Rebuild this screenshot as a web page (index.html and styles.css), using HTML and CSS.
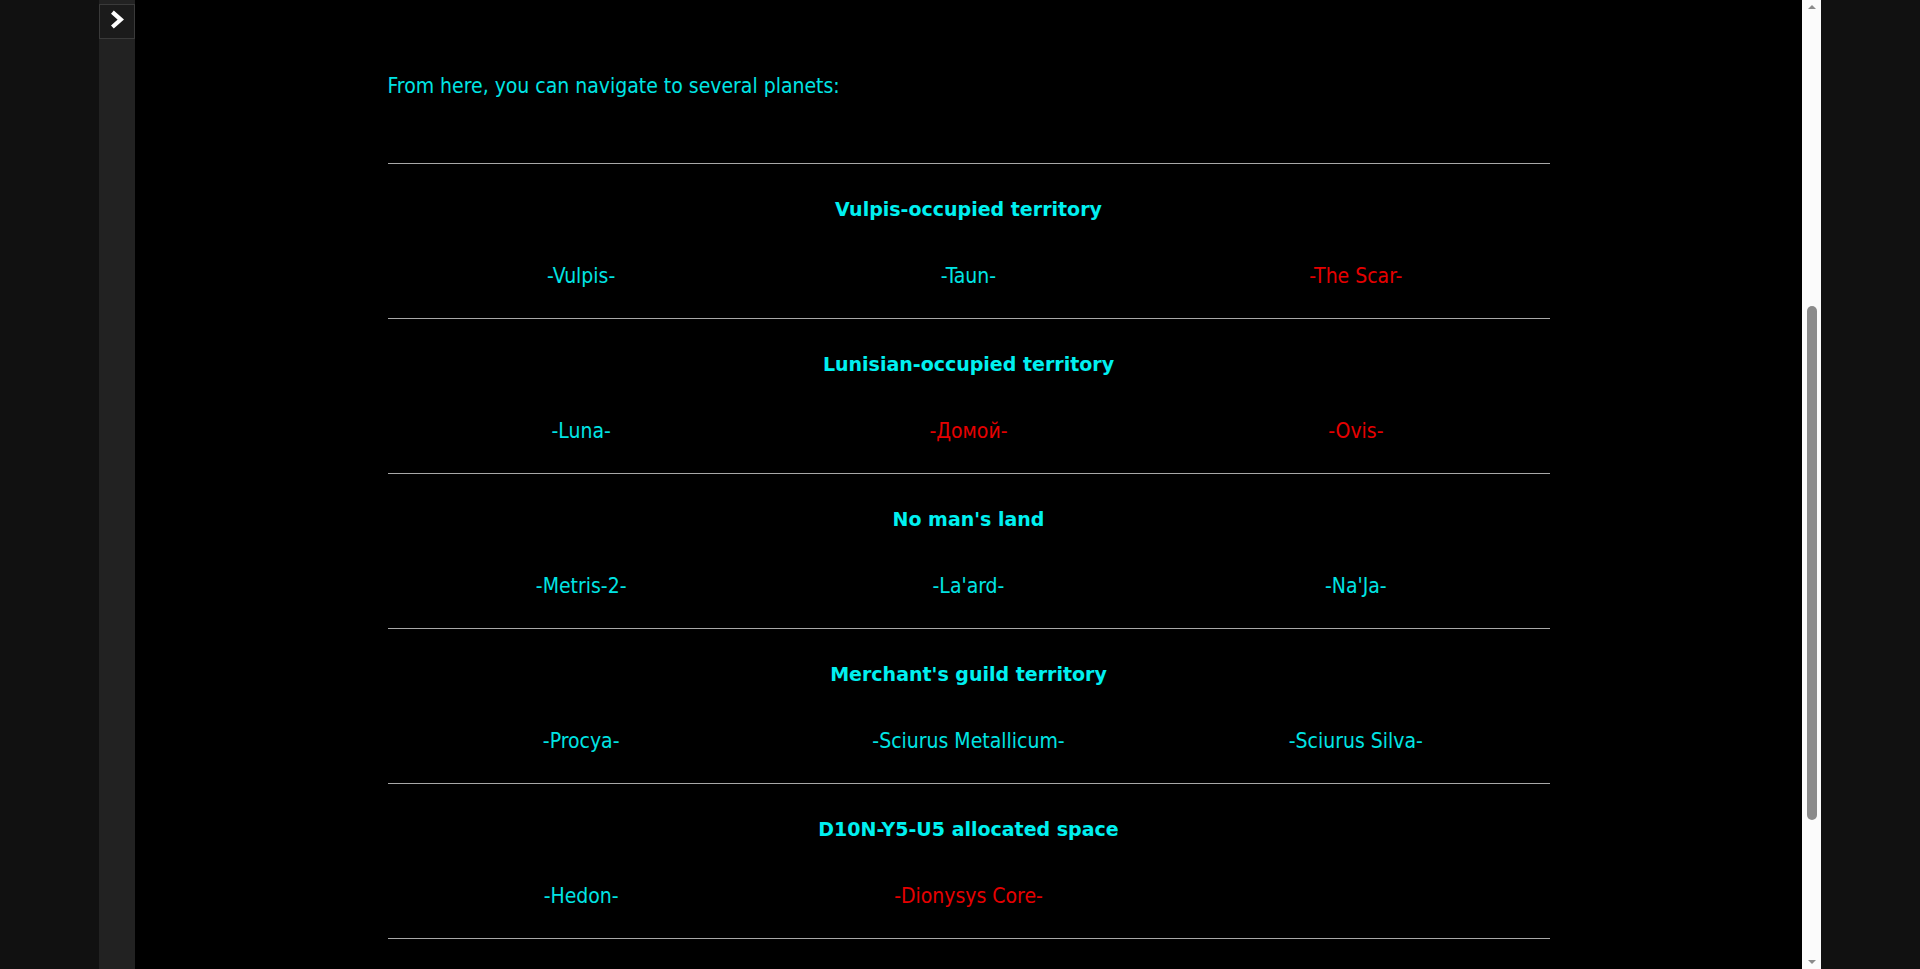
FILE: index.html
```html
<!DOCTYPE html>
<html>
<head>
    <title>Navigation</title>
    <link rel="stylesheet" href="styles.css">
</head>
<body>
    <div class="app">
        <aside class="sidebar">
            <button class="toggle" title="Open menu">
                <svg width="14" height="20" viewBox="0 0 14 20">
                    <polyline points="2.4,2.2 10.8,9.6 2.4,17" fill="none" stroke="#fff" stroke-width="4.2" stroke-linejoin="miter"/>
                </svg>
            </button>
        </aside>

        <main class="main">
            <div class="viewport">
                <div class="content">
                    <p class="lead">From here, you can navigate to several planets:</p>

                    <section class="region">
                        <h3>Vulpis-occupied territory</h3>
                        <div class="planets">
                            <a href="#">-Vulpis-</a>
                            <a href="#">-Taun-</a>
                            <a href="#" class="locked">-The Scar-</a>
                        </div>
                    </section>

                    <section class="region">
                        <h3>Lunisian-occupied territory</h3>
                        <div class="planets">
                            <a href="#">-Luna-</a>
                            <a href="#" class="locked">-Домой-</a>
                            <a href="#" class="locked">-Ovis-</a>
                        </div>
                    </section>

                    <section class="region">
                        <h3>No man's land</h3>
                        <div class="planets">
                            <a href="#">-Metris-2-</a>
                            <a href="#">-La'ard-</a>
                            <a href="#">-Na'Ja-</a>
                        </div>
                    </section>

                    <section class="region">
                        <h3>Merchant's guild territory</h3>
                        <div class="planets">
                            <a href="#">-Procya-</a>
                            <a href="#">-Sciurus Metallicum-</a>
                            <a href="#">-Sciurus Silva-</a>
                        </div>
                    </section>

                    <section class="region">
                        <h3>D10N-Y5-U5 allocated space</h3>
                        <div class="planets">
                            <a href="#">-Hedon-</a>
                            <a href="#" class="locked">-Dionysys Core-</a>
                        </div>
                    </section>
                </div>
            </div>

            <div class="scrollbar">
                <span class="arrow up"></span>
                <div class="track">
                    <div class="thumb"></div>
                </div>
                <span class="arrow down"></span>
            </div>
        </main>
    </div>
</body>
</html>
```

FILE: styles.css
```css
body {
    margin: 0;
    background-color: #111;
    font-family: "DejaVu Sans Condensed", "DejaVu Sans", sans-serif;
    color: #00e4e4;
}

.app {
    display: flex;
    width: 1722px;
    height: 100vh;
    margin: 0 auto;
}

.sidebar {
    width: 36px;
    flex-shrink: 0;
    background-color: #222;
    padding-top: 4px;
}

.toggle {
    display: flex;
    align-items: center;
    justify-content: center;
    width: 36px;
    height: 35px;
    padding: 0 0 3px;
    border: 1px solid #3a3a3a;
    background-color: #1b1b1b;
    cursor: pointer;
}

.main {
    flex: 1;
    display: flex;
    min-width: 0;
}

.viewport {
    flex: 1;
    background-color: #000;
    overflow-y: auto;
}

.scrollbar {
    width: 19px;
    flex-shrink: 0;
    display: flex;
    flex-direction: column;
    align-items: center;
    background-color: #fbfbfb;
}

.arrow {
    width: 0;
    height: 0;
    border-left: 4.5px solid transparent;
    border-right: 4.5px solid transparent;
}

.arrow.up {
    margin: 5px 0 6px;
    border-bottom: 4.5px solid #8b8b8b;
}

.arrow.down {
    margin: 5px 0 5px;
    border-top: 4.5px solid #8b8b8b;
}

.track {
    flex: 1;
    width: 10px;
    padding-top: 291px;
}

.thumb {
    height: 514px;
    border-radius: 5px;
    background-color: #8b8b8b;
}

.content {
    width: 1162px;
    margin: 0 auto;
    padding: 73px 0 60px;
}

.lead {
    margin: 0 0 64px;
    font-size: 21px;
    line-height: 26px;
}

.region {
    border-top: 1px solid #a8a8a8;
    padding: 33px 0 29px;
}

.region:last-child {
    border-bottom: 1px solid #a8a8a8;
}

.region h3 {
    margin: 0 0 42px;
    text-align: center;
    font-family: "DejaVu Sans", sans-serif;
    font-size: 19px;
    line-height: 24px;
    color: #00f0f0;
}

.planets {
    display: grid;
    grid-template-columns: repeat(3, 1fr);
    text-align: center;
    font-size: 21px;
    line-height: 26px;
}

.planets a {
    color: #00e4e4;
    text-decoration: none;
}

.planets a.locked {
    color: #e60000;
}
```
